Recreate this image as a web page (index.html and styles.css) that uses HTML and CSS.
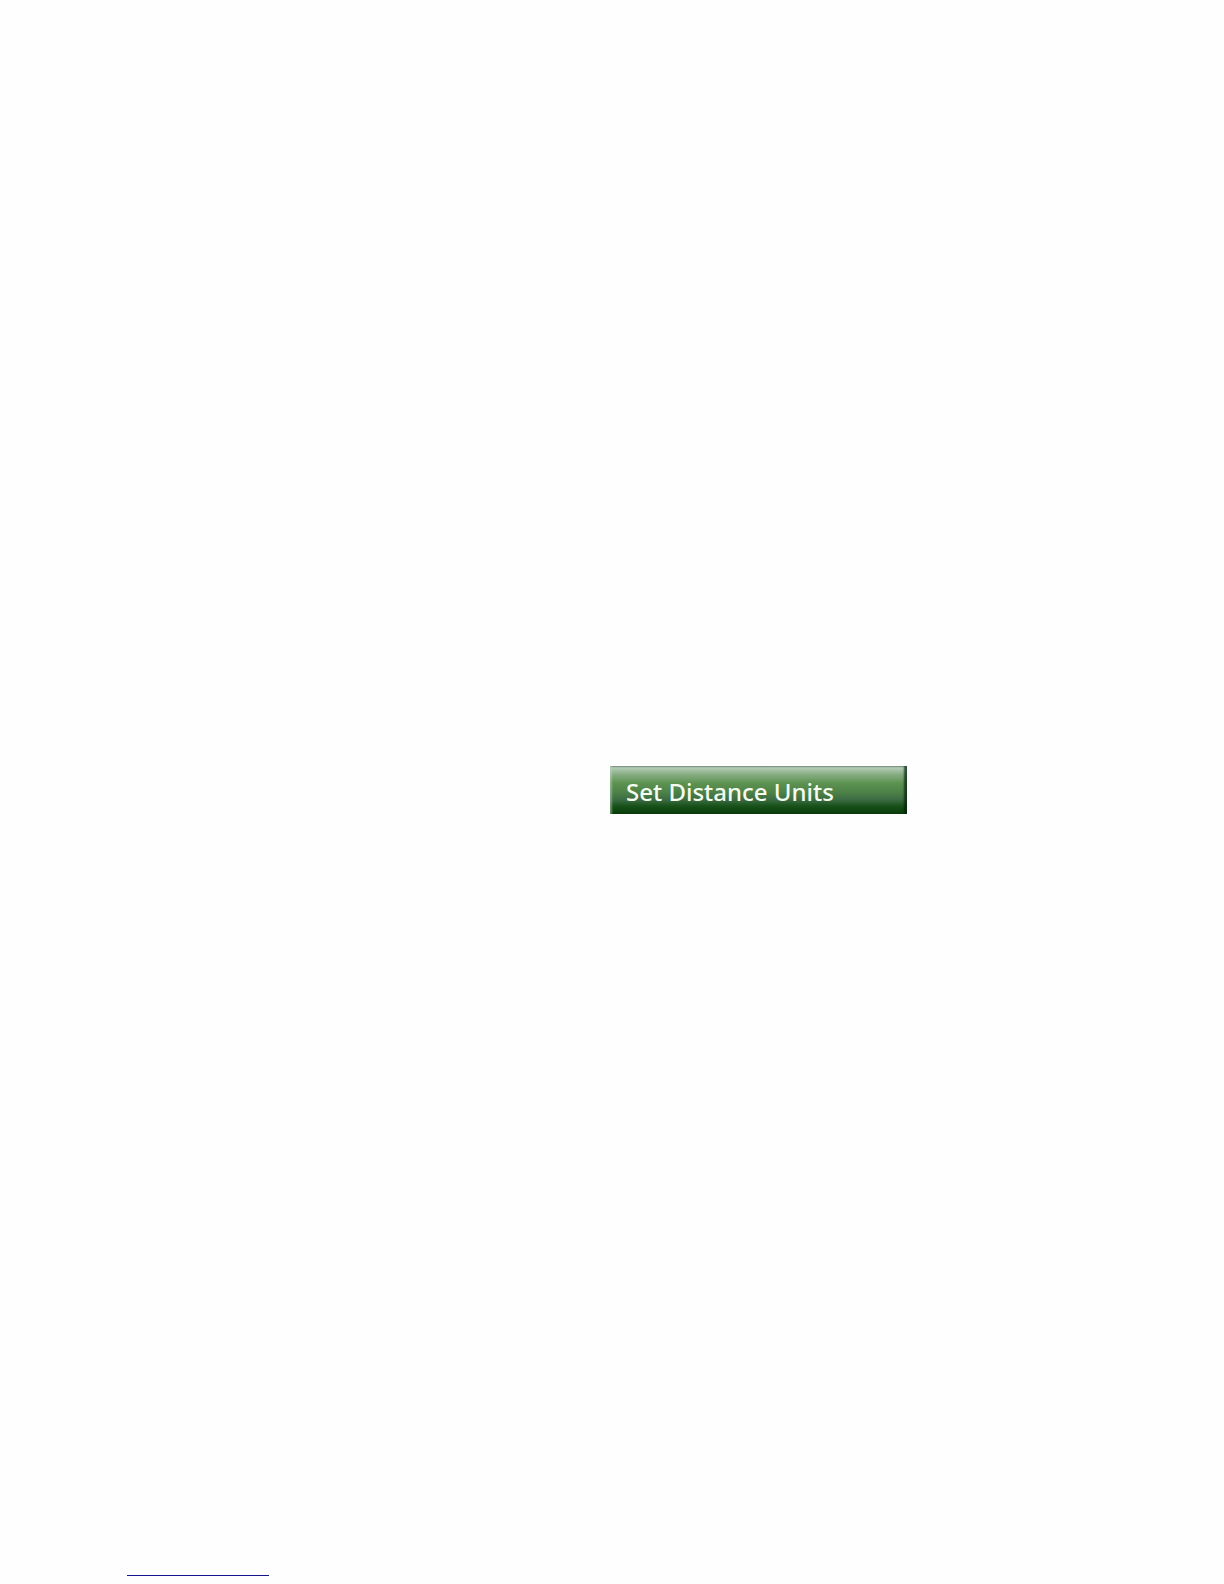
FILE: index.html
```html
<!DOCTYPE html>
<html lang="en">
<head>
    <meta charset="UTF-8">
    <meta name="viewport" content="width=device-width, initial-scale=1.0">
    <title>Set Distance Units</title>
    <link rel="stylesheet" href="styles.css">
</head>
<body>

    <main class="content">
        <button type="button" class="menu-button">Set Distance Units</button>
    </main>

    <footer class="footer">
        <hr class="footer-line">
    </footer>

</body>
</html>
```

FILE: styles.css
```css
body {
    font-family: "Noto Sans", sans-serif;
    margin: 0;
    min-height: 100vh;
    display: flex;
    flex-direction: column;
    background: #fefefe;
}

.content {
    flex: 1;
    display: grid;
    grid-template-columns: 1fr 1fr;
    align-items: center;
    padding: 4px 4px 0 0;
}

/* Glossy green button with a raised edge */
.menu-button {
    grid-column: 2;
    width: 297px;
    height: 48px;
    padding: 4px 16px 0;
    border: none;
    background: linear-gradient(#9aaa9c 0%, #b2ccb4 4%, #86ac82 18%, #5c9250 36%, #4e8248 54%, #3c6c44 70%, #175018 84%, #083c08 100%);
    box-shadow: inset 3px 0 2px -1px rgba(190, 215, 190, 0.5), inset -3px 0 2px rgba(0, 30, 10, 0.7);
    color: #f4fbef;
    font-family: inherit;
    font-size: 24px;
    font-weight: 500;
    line-height: 32px;
    text-align: left;
    cursor: pointer;
}

.footer {
    padding: 0 127px 8px;
}

.footer-line {
    width: 142px;
    height: 1px;
    margin: 0;
    border: none;
    background: #14148c;
}
```
